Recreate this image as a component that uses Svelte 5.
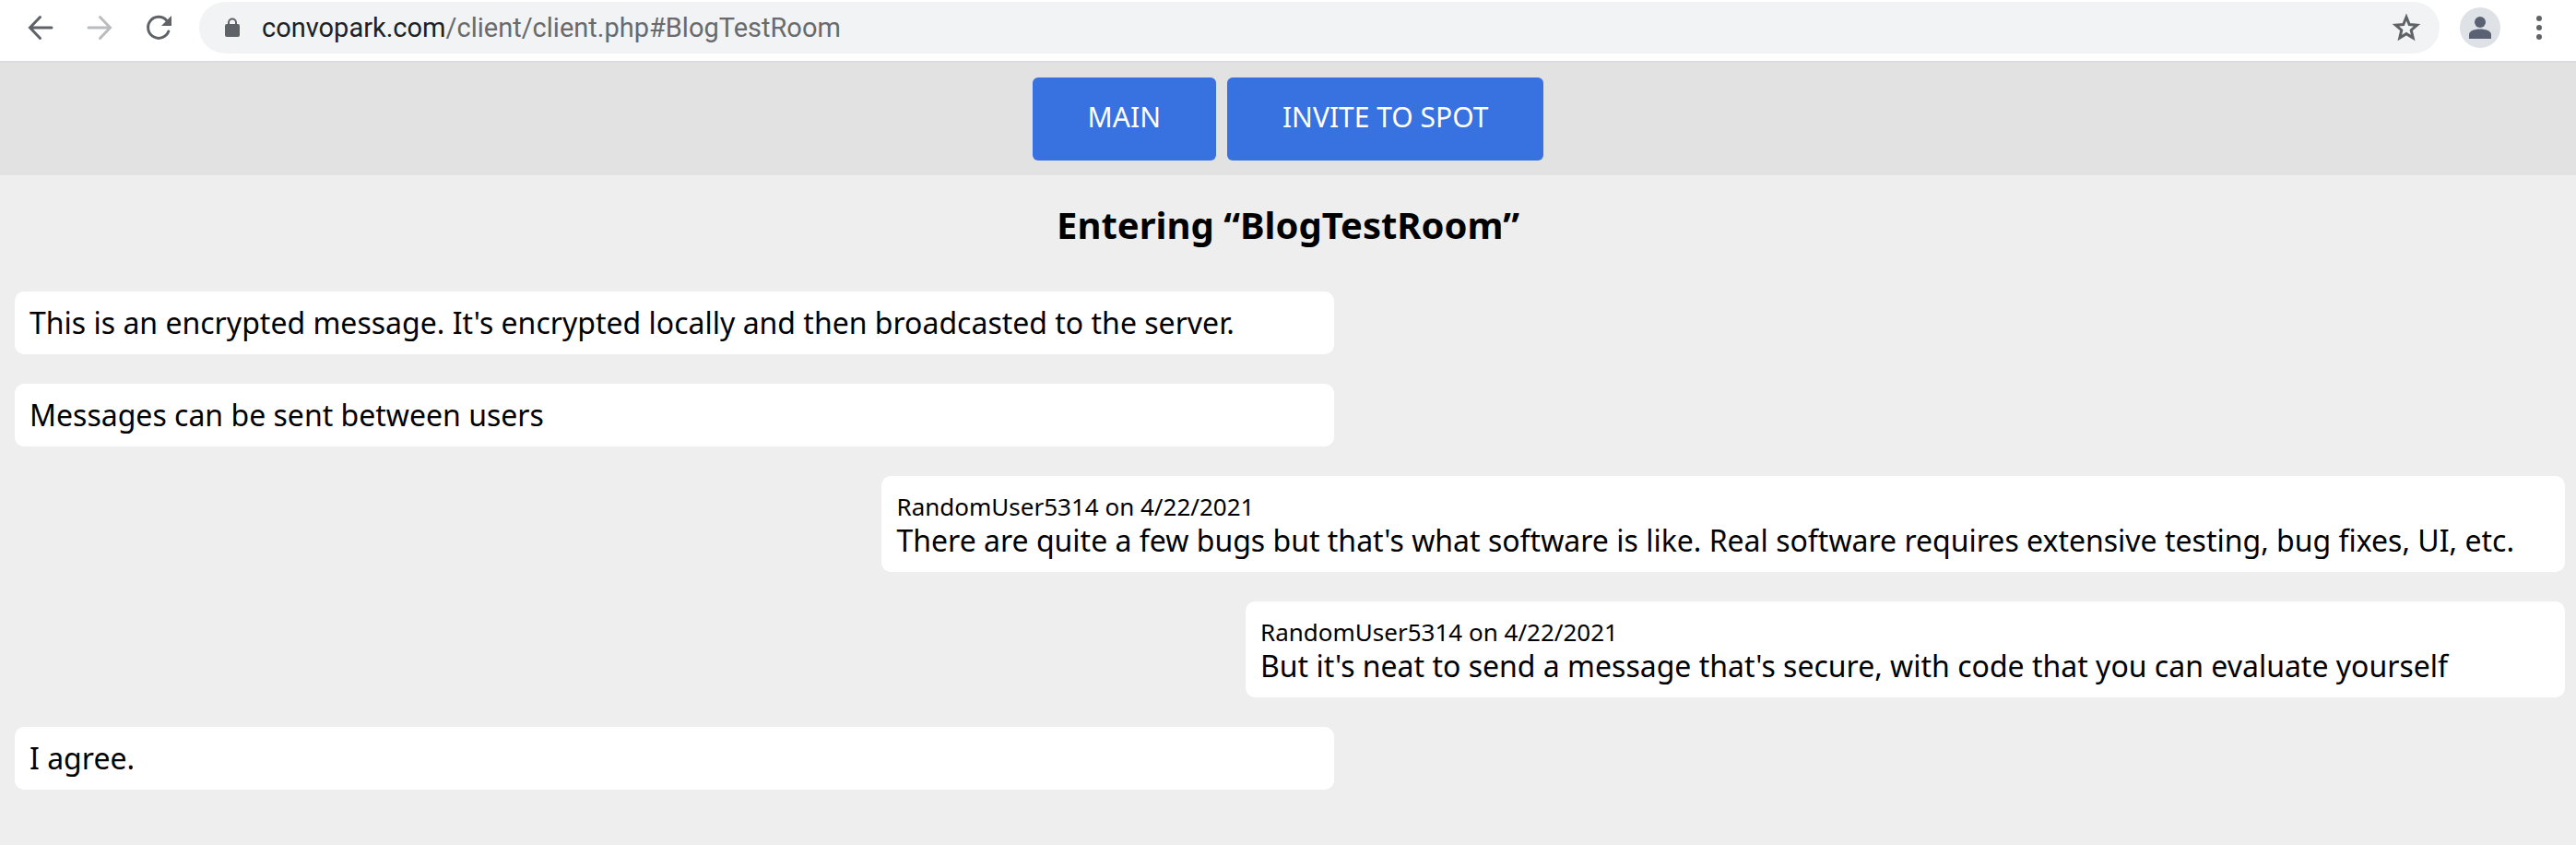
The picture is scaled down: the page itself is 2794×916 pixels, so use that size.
<script lang="ts">
  type Message = { text: string; author?: string; date?: string };

  const room = "BlogTestRoom";
  const host = "convopark.com";
  const path = `/client/client.php#${room}`;

  const messages: Message[] = [
    { text: "This is an encrypted message. It's encrypted locally and then broadcasted to the server." },
    { text: "Messages can be sent between users" },
    {
      text: "There are quite a few bugs but that's what software is like. Real software requires extensive testing, bug fixes, UI, etc.",
      author: "RandomUser5314",
      date: "4/22/2021",
    },
    {
      text: "But it's neat to send a message that's secure, with code that you can evaluate yourself",
      author: "RandomUser5314",
      date: "4/22/2021",
    },
    { text: "I agree." },
  ];
</script>

<div class="page">
  <header class="toolbar">
    <div class="history">
      <button class="icon" aria-label="Back">
        <svg viewBox="0 0 32 32" width="32" height="32">
          <path d="M28 16H5M15.500 4.500L4.500 16l11 11.500" />
        </svg>
      </button>
      <button class="icon faded" aria-label="Forward" disabled>
        <svg viewBox="0 0 32 32" width="32" height="32">
          <path d="M4 16h23M16.500 4.500l11 11.500-11 11.500" />
        </svg>
      </button>
      <button class="icon" aria-label="Reload">
        <svg viewBox="0 0 32 32" width="32" height="32">
          <path d="M24.500 8A11.500 11.500 0 1 0 26.800 20" />
          <path class="solid" d="M30 3v11H19z" />
        </svg>
      </button>
    </div>

    <div class="address">
      <svg class="lock" viewBox="0 0 16 22" width="16" height="22">
        <path d="M4 8V5.500a4 4 0 0 1 8 0V8" />
        <rect x="0" y="7" width="16" height="14" rx="2" />
      </svg>
      <span class="url">{host}<span class="path">{path}</span></span>
      <button class="icon" aria-label="Bookmark this page">
        <svg viewBox="0 0 32 32" width="32" height="32">
          <path class="star" d="M16 4.500l3.200 8 8.400.7-6.400 5.500 2 8.300L16 22.600 8.800 27l2-8.300-6.400-5.500 8.400-.7z" />
        </svg>
      </button>
    </div>

    <button class="avatar" aria-label="Profile">
      <svg viewBox="0 0 24 24" width="24" height="24">
        <circle cx="12" cy="6" r="6" />
        <path d="M0 24v-4.500C0 15.500 6 13.500 12 13.500s12 2 12 6V24z" />
      </svg>
    </button>
    <button class="icon" aria-label="Menu">
      <svg class="dots" viewBox="0 0 12 32" width="12" height="32">
        <circle cx="6" cy="6" r="3" />
        <circle cx="6" cy="16" r="3" />
        <circle cx="6" cy="26" r="3" />
      </svg>
    </button>
  </header>

  <nav>
    <button class="action">MAIN</button>
    <button class="action">INVITE TO SPOT</button>
  </nav>

  <main>
    <h1>Entering “{room}”</h1>
    <div class="messages">
      {#each messages as message}
        <div class="message" class:other={message.author} class:long={message.text.length > 100}>
          {#if message.author}
            <div class="meta">{message.author} on {message.date}</div>
          {/if}
          <div>{message.text}</div>
        </div>
      {/each}
    </div>
  </main>
</div>

<style>
  :global(body) {
    background: #eee;
  }
  .page {
    font-family: "Noto Sans", Tahoma, sans-serif;
    color: #000;
  }
  button {
    border: none;
    padding: 0;
    font-family: inherit;
    cursor: pointer;
  }
  .toolbar {
    display: flex;
    align-items: center;
    padding: 2px 34px 8px 28px;
    background: #fff;
    border-bottom: 2px solid #dadce0;
  }
  .history {
    display: flex;
    gap: 32px;
    margin-right: 28px;
  }
  .icon {
    display: flex;
    background: none;
  }
  .icon svg {
    fill: none;
    stroke: #5f6368;
    stroke-width: 3;
    stroke-linecap: round;
  }
  .icon .solid,
  .icon .dots {
    fill: #5f6368;
    stroke: none;
  }
  .icon .star {
    stroke-linecap: butt;
  }
  .faded svg {
    stroke: #babcbe;
  }
  .address {
    flex: 1;
    display: flex;
    align-items: center;
    height: 56px;
    padding: 0 20px 0 28px;
    border-radius: 28px;
    background: #f1f3f4;
  }
  .lock {
    fill: #5f6368;
  }
  .lock path {
    fill: none;
    stroke: #5f6368;
    stroke-width: 2;
  }
  .url {
    flex: 1;
    margin-left: 24px;
    font-family: Roboto, sans-serif;
    font-size: 29px;
    line-height: 32px;
    color: #202124;
  }
  .path {
    color: #686a6d;
  }
  .avatar {
    display: flex;
    align-items: center;
    justify-content: center;
    width: 44px;
    height: 44px;
    margin: 0 36px 0 22px;
    border-radius: 50%;
    background: #dee1e6;
  }
  .avatar svg {
    fill: #5a6172;
  }
  nav {
    display: flex;
    justify-content: center;
    gap: 12px;
    padding: 16px;
    background: #e2e2e2;
  }
  .action {
    padding: 24px 60px 28px;
    border-radius: 6px;
    background: #3871e0;
    color: #fff;
    font-size: 30px;
    line-height: 38px;
  }
  h1 {
    margin: 30px 0 48px;
    font-size: 40px;
    line-height: 48px;
    text-align: center;
  }
  .messages {
    display: flex;
    flex-direction: column;
    align-items: flex-start;
    gap: 32px;
    padding: 0 12px 32px 16px;
  }
  .message {
    box-sizing: border-box;
    min-width: calc(50% + 48px);
    padding: 15px 16px;
    border-radius: 10px;
    background: #fff;
    font-size: 32px;
    line-height: 38px;
  }
  .other {
    align-self: flex-end;
  }
  .long {
    min-width: 66%;
  }
  .meta {
    font-size: 26px;
    line-height: 36px;
  }
</style>
